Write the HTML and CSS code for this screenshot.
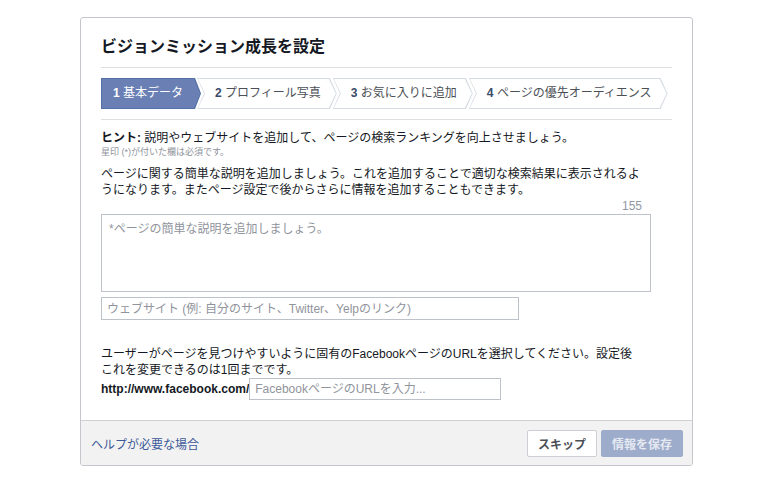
FILE: index.html
```html
<!DOCTYPE html>
<html lang="ja">
<head>
  <meta charset="UTF-8" />
  <title>ビジョンミッション成長を設定</title>
  <link rel="stylesheet" href="styles.css">
</head>
<body>
  <div class="dialog">
    <div class="dialog-body">
      <h2 class="title">ビジョンミッション成長を設定</h2>

      <div class="steps">
        <div class="step step-first active"><span><b>1</b> 基本データ</span></div>
        <div class="step"><span><b>2</b> プロフィール写真</span></div>
        <div class="step"><span><b>3</b> お気に入りに追加</span></div>
        <div class="step"><span><b>4</b> ページの優先オーディエンス</span></div>
      </div>

      <div class="hint"><b>ヒント:</b> 説明やウェブサイトを追加して、ページの検索ランキングを向上させましょう。</div>
      <div class="required">星印 (*)が付いた欄は必須です。</div>

      <div class="form">
        <p class="text">ページに関する簡単な説明を追加しましょう。これを追加することで適切な検索結果に表示されるよ<br>うになります。またページ設定で後からさらに情報を追加することもできます。</p>
        <div class="counter">155</div>
        <textarea class="about" placeholder="*ページの簡単な説明を追加しましょう。"></textarea>
        <input class="website" type="text" placeholder="ウェブサイト (例: 自分のサイト、Twitter、Yelpのリンク)">

        <p class="text url-text">ユーザーがページを見つけやすいように固有のFacebookページのURLを選択してください。設定後<br>これを変更できるのは1回までです。</p>
        <div class="url-row">
          <span class="url-prefix">http://www.facebook.com/</span>
          <input class="url" type="text" placeholder="FacebookページのURLを入力...">
        </div>
      </div>
    </div>

    <div class="footer">
      <a class="help" href="#">ヘルプが必要な場合</a>
      <div class="buttons">
        <button class="btn btn-skip">スキップ</button>
        <button class="btn btn-save" disabled>情報を保存</button>
      </div>
    </div>
  </div>
</body>
</html>
```

FILE: styles.css
```css
body {
  margin: 0;
  padding: 0;
  background: #fff;
  font-family: 'Liberation Sans', 'Noto Sans CJK JP', sans-serif;
  font-size: 12px;
  color: #141823;
}

.dialog {
  width: 611px;
  margin: 17px 0 0 80px;
  border: 1px solid #c4c6cb;
  border-radius: 3px;
  background: #fff;
  overflow: hidden;
}

.dialog-body {
  padding: 0 20px 20px 20px;
}

.title {
  margin: 0;
  padding: 19px 0 10px;
  font-size: 16px;
  line-height: 20px;
  font-weight: bold;
  color: #141823;
  border-bottom: 1px solid #dddfe2;
}

/* step bar */
.steps {
  display: flex;
  margin-top: 10px;
  padding-bottom: 10px;
  border-bottom: 1px solid #dddfe2;
}

.step {
  position: relative;
  height: 31px;
  line-height: 31px;
  padding: 0 16px 0 18px;
  margin-left: -4px;
  background: #d6dbe4;
  color: #4b4f56;
  white-space: nowrap;
  clip-path: polygon(0 0, calc(100% - 7px) 0, 100% 50%, calc(100% - 7px) 100%, 0 100%, 7px 50%);
}

.step::before {
  content: '';
  position: absolute;
  top: 1px;
  bottom: 1px;
  left: 1px;
  right: 1px;
  background: #fff;
  clip-path: polygon(0 0, calc(100% - 7px) 0, 100% 50%, calc(100% - 7px) 100%, 0 100%, 7px 50%);
}

.step span {
  position: relative;
}

.step b {
  color: #3b4a6b;
}

.step-first {
  margin-left: 0;
  padding-left: 12px;
  padding-right: 18px;
  clip-path: polygon(0 0, calc(100% - 6px) 0, 100% 50%, calc(100% - 6px) 100%, 0 100%);
}

.step-first::before {
  clip-path: polygon(0 0, calc(100% - 6px) 0, 100% 50%, calc(100% - 6px) 100%, 0 100%);
}

.step.active {
  background: #5470a9;
  color: #fff;
}

.step.active::before {
  background: #6a80b5;
}

.step.active b {
  color: #fff;
}

/* hint */
.hint {
  margin-top: 10px;
  line-height: 16px;
}

.required {
  font-size: 9px;
  line-height: 12px;
  color: #90949c;
}

.form {
  width: 550px;
}

.text {
  margin: 8px 0 0;
  line-height: 16px;
  white-space: nowrap;
}

.counter {
  text-align: right;
  padding-right: 9px;
  line-height: 16px;
  color: #9197a3;
}

.about,
.website,
.url {
  display: block;
  box-sizing: border-box;
  margin: 0;
  border: 1px solid #bdc1c9;
  font-family: 'Liberation Sans', 'Noto Sans CJK JP', sans-serif;
  font-size: 12px;
  color: #141823;
  background: #fff;
  outline: none;
}

.about::placeholder,
.website::placeholder,
.url::placeholder {
  color: #90949c;
}

.about {
  width: 550px;
  height: 78px;
  padding: 6px 7px;
  line-height: 16px;
  resize: none;
}

.website {
  width: 418px;
  height: 23px;
  margin-top: 5px;
  padding: 0 5px;
}

.url-text {
  margin-top: 26px;
}

.url-row {
  display: flex;
  align-items: center;
}

.url-prefix {
  font-weight: bold;
  white-space: nowrap;
}

.url {
  width: 252px;
  height: 22px;
  padding: 0 5px;
}

/* footer */
.footer {
  display: flex;
  justify-content: space-between;
  align-items: center;
  height: 44px;
  padding: 0 9px 0 10px;
  background: #f2f2f2;
  border-top: 1px solid #d0d1d5;
}

.help {
  color: #3b5998;
  text-decoration: none;
}

.buttons {
  display: flex;
  gap: 4px;
}

.btn {
  height: 27px;
  padding: 0 10px;
  border-radius: 2px;
  font-family: 'Liberation Sans', 'Noto Sans CJK JP', sans-serif;
  font-size: 12px;
  font-weight: bold;
  white-space: nowrap;
  cursor: pointer;
}

.btn-skip {
  background: #fff;
  border: 1px solid #ccd0d5;
  color: #4b4f56;
}

.btn-save {
  background: #9eaccb;
  border: 1px solid #9eaccb;
  color: #e4e8f1;
}
```
